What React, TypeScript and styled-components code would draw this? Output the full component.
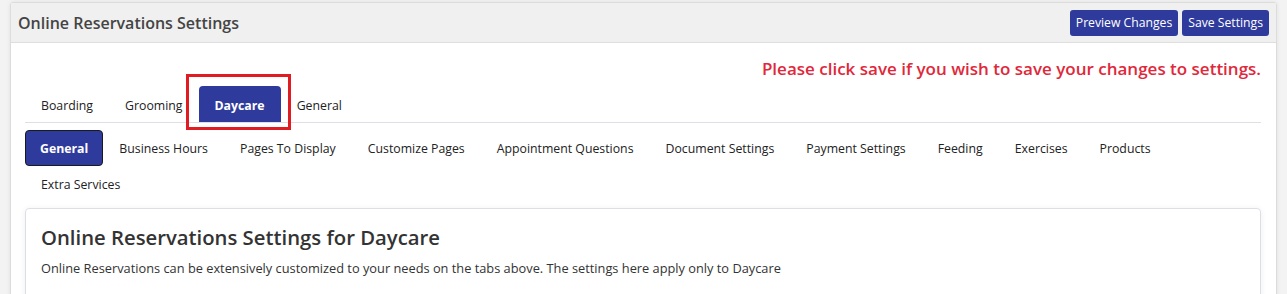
import React from "react";
import styled, { createGlobalStyle } from "styled-components";

const GlobalStyle = createGlobalStyle`
  html, body { margin: 0; padding: 0; }
  body {
    background: #f3f3f3;
    font-family: "Open Sans", "Noto Sans", Arial, sans-serif;
    font-size: 13px;
    color: #222;
  }
`;

const Page = styled.div`
  padding: 2px 10px 0 10px;
  width: 1287px;
  box-sizing: border-box;
  height: 294px;
  overflow: hidden;
`;

const Card = styled.div`
  background: #fff;
  border: 1px solid #dcdcdc;
  border-radius: 3px 3px 0 0;
  box-shadow: 0 0 4px rgba(0, 0, 0, 0.08);
  width: 1267px;
  box-sizing: border-box;
  height: 300px;
`;

const Header = styled.div`
  display: flex;
  align-items: center;
  justify-content: space-between;
  height: 40px;
  box-sizing: border-box;
  padding: 0 7px 0 7px;
  background: #f0f0f0;
  border-bottom: 1px solid #dedede;
`;

const Title = styled.h1`
  margin: 0;
  font-size: 16px;
  font-weight: 600;
  color: #444;
`;

const Actions = styled.div`
  display: flex;
  gap: 4px;
`;

const Button = styled.button`
  font-family: inherit;
  font-size: 12.2px;
  color: #fff;
  background: #2f3b9c;
  border: none;
  border-radius: 3px;
  height: 26px;
  padding: 0 6px;
  cursor: pointer;
`;

const Body = styled.div`
  padding: 0 15px 0 14px;
`;

const Notice = styled.div`
  text-align: right;
  color: #e0283a;
  font-size: 17px;
  font-weight: 600;
  padding: 14px 0 0 0;
  height: 29px;
`;

const TopTabs = styled.div`
  display: flex;
  border-bottom: 1px solid #dedee6;
`;

const TopTab = styled.div<{ $active?: boolean }>`
  position: relative;
  height: 36px;
  box-sizing: border-box;
  display: flex;
  align-items: center;
  padding: 3px 16px 0;
  font-size: 12.3px;
  border-radius: 4px 4px 0 0;
  color: ${(p) => (p.$active ? "#fff" : "#222")};
  background: ${(p) => (p.$active ? "#2f3b9c" : "transparent")};
  font-weight: ${(p) => (p.$active ? 700 : 400)};
`;

const Highlight = styled.span`
  position: absolute;
  left: -13px;
  right: -10px;
  top: -12px;
  bottom: -8px;
  border: 3px solid #e11b22;
  pointer-events: none;
`;

const SubTabs = styled.div`
  display: flex;
  flex-wrap: wrap;
  margin-top: 7px;
`;

const SubTab = styled.div<{ $active?: boolean }>`
  height: 36px;
  box-sizing: border-box;
  display: flex;
  align-items: center;
  padding: 1px ${(p) => (p.$active ? 14 : 15)}px 0;
  font-size: 12.3px;
  border-radius: 4px;
  border: 1px solid ${(p) => (p.$active ? "#1a1a1a" : "transparent")};
  color: ${(p) => (p.$active ? "#fff" : "#222")};
  background: ${(p) => (p.$active ? "#2f3b9c" : "transparent")};
  font-weight: ${(p) => (p.$active ? 700 : 400)};
`;

const Panel = styled.div`
  margin-top: 6px;
  border: 1px solid #dedee6;
  border-radius: 4px;
  box-shadow: 0 1px 6px rgba(0, 0, 0, 0.07);
  padding: 15px 15px 20px;
  height: 120px;
`;

const PanelTitle = styled.h2`
  margin: 0;
  font-size: 20.3px;
  font-weight: 600;
  color: #333;
  line-height: 27px;
`;

const PanelText = styled.p`
  margin: 8px 0 0;
  font-size: 12.8px;
  color: #333;
`;

const topTabs = ["Boarding", "Grooming", "Daycare", "General"];
const subTabs = [
  "General",
  "Business Hours",
  "Pages To Display",
  "Customize Pages",
  "Appointment Questions",
  "Document Settings",
  "Payment Settings",
  "Feeding",
  "Exercises",
  "Products",
  "Extra Services",
];

export default function App() {
  return (
    <>
      <GlobalStyle />
      <Page>
        <Card>
          <Header>
            <Title>Online Reservations Settings</Title>
            <Actions>
              <Button>Preview Changes</Button>
              <Button>Save Settings</Button>
            </Actions>
          </Header>
          <Body>
            <Notice>Please click save if you wish to save your changes to settings.</Notice>
            <TopTabs>
              {topTabs.map((t) => (
                <TopTab key={t} $active={t === "Daycare"}>
                  {t}
                  {t === "Daycare" && <Highlight />}
                </TopTab>
              ))}
            </TopTabs>
            <SubTabs>
              {subTabs.map((t, i) => (
                <SubTab key={t + i} $active={i === 0}>
                  {t}
                </SubTab>
              ))}
            </SubTabs>
            <Panel>
              <PanelTitle>Online Reservations Settings for Daycare</PanelTitle>
              <PanelText>
                Online Reservations can be extensively customized to your needs on the tabs above. The settings here apply only to Daycare
              </PanelText>
            </Panel>
          </Body>
        </Card>
      </Page>
    </>
  );
}
